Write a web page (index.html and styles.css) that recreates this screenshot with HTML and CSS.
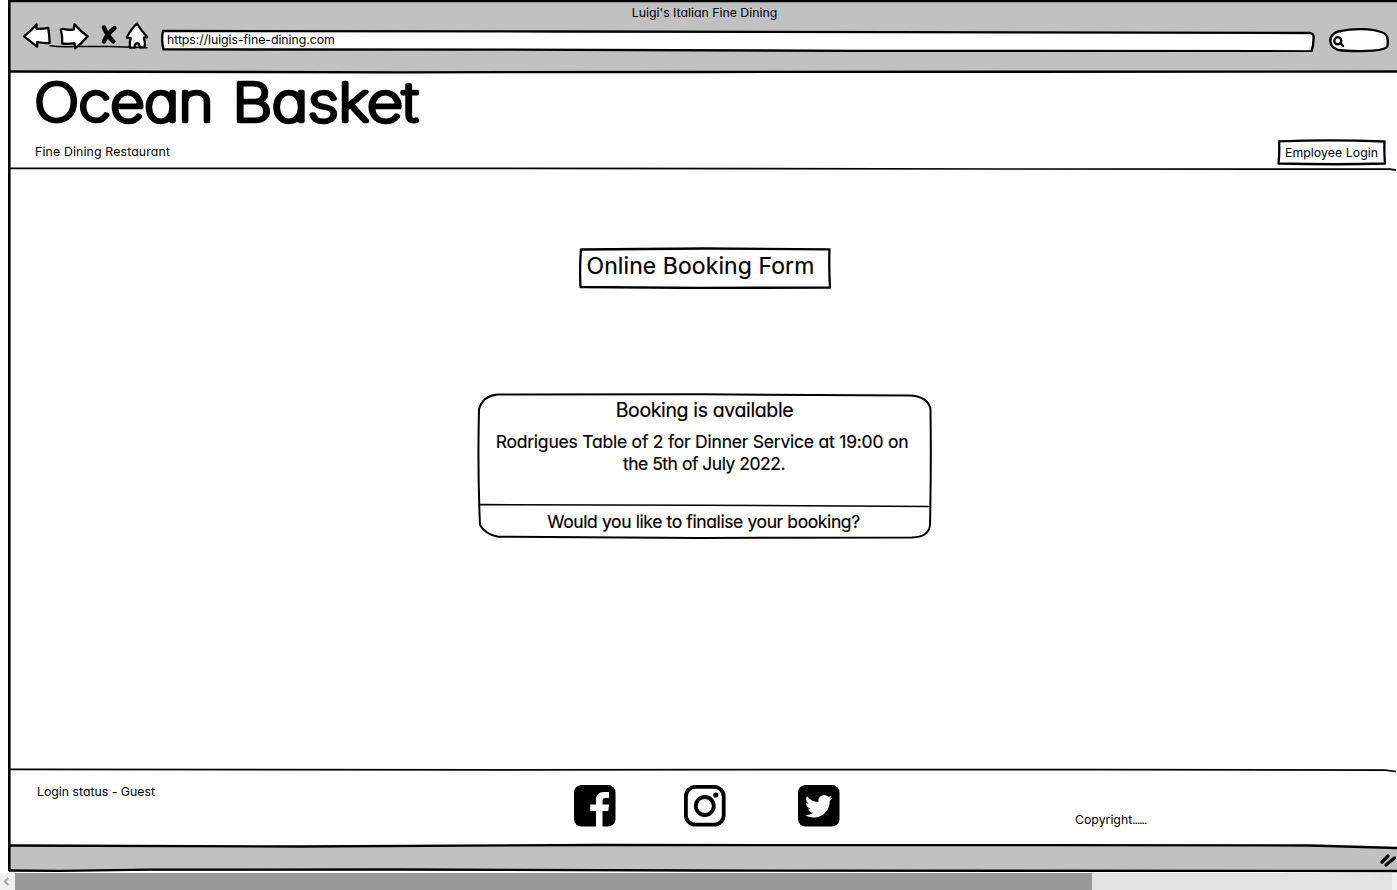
FILE: index.html
```html
<!DOCTYPE html>
<html lang="en">
<head>
<meta charset="utf-8">
<title>Luigi's Italian Fine Dining</title>
<link rel="stylesheet" href="styles.css">
</head>
<body>
<div class="screen">
  <div class="window">
    <header class="chrome">
      <div class="chrome-title"><span class="t-title">Luigi's Italian Fine Dining</span></div>
      <div class="toolbar">
        <svg class="nav-icons" viewBox="20 20 132 30" width="132" height="30">
          <g class="ink-shape">
            <path d="M24 36.3Q31 31 36.500 24.500L36.500 28.800Q42 29.200 48.300 27.800Q49.500 36 49.600 43Q43 43.500 37.300 42L37 46.600Q30 41 24 36.300Z"/>
            <path class="thin" d="M50 45.800Q60 47.200 75 46.500L110 46.600 147 47.800"/>
            <path d="M60.800 30Q61 28.800 64 29Q69 30.500 73.800 29.300L74.500 24.200Q80 31 87.600 36.300Q82 43.500 75 48.200L74.600 43.200Q68 44.500 62.200 43.500Q62.800 36 60.800 30Z"/>
            <path d="M137 23.500Q141 30.500 147.200 37L143.800 37.600Q145.500 42 144.800 47.200L139.800 47.300Q139 42.500 136.500 43.300Q134.500 43.500 134.800 47.700L129.800 47.600Q129.300 42 130.800 38.200L126.800 37.500Q131 29 137 23.500Z"/>
          </g>
          <path class="cross" d="M103.800 27.500Q108 36.500 113.300 41.300M114.500 28Q107 34 104 41.500"/>
        </svg>
        <div class="address">
          <svg class="sketch" viewBox="0 0 1155 23" width="1155" height="23"><path d="M3 2 400 2.500 1150.500 4Q1154.500 5 1153.500 10Q1153.500 17 1151.500 22.300L700 21.800 350 20.700 3.500 20.400Q1 11 3 2Z"/></svg>
          <span class="t-url">https://luigis-fine-dining.com</span>
        </div>
        <svg class="search" viewBox="1328 26 64 28" width="64" height="28">
          <g class="ink-shape"><path d="M1343 50.500C1328 51 1325 33 1341 31C1353 28 1372 28.500 1381 32C1389 34 1388 41 1387.500 46C1386 51 1365 52 1343 50.500Z"/>
          <path d="M1338.500 37.300A3.500 3.500 0 1 0 1339 44A3.500 3.500 0 0 0 1338.500 37.300M1340.500 43 1343 46"/></g>
        </svg>
      </div>
    </header>
    <section class="site-header">
      <h1 class="brand"><svg width="400" height="67" viewBox="0 0 400 67"><text x="-0.500" y="49" textLength="179" lengthAdjust="spacingAndGlyphs">Ocean</text><text x="197.500" y="49" textLength="185" lengthAdjust="spacingAndGlyphs">Basket</text></svg></h1>
      <div class="subrow">
        <span class="t-sub">Fine Dining Restaurant</span>
        <div class="login">
          <svg class="sketch" viewBox="0 0 109 27" width="109" height="27"><path d="M2 2.300Q54 .2 107.500 2.500Q107 13 108 24.500Q60 26 1.500 24.500Q2.800 12 2 2.300Z"/></svg>
          <span class="t-login">Employee Login</span>
        </div>
      </div>
    </section>
    <main class="content">
      <div class="form-title">
        <svg class="sketch" viewBox="0 0 252 42" width="252" height="42"><path d="M2 2.500 126 1.500 250.500 2.300Q249.800 20 251 40.500L120 41 1.500 40Q.5 20 2 2.500Z"/></svg>
        <span class="t-form">Online Booking Form</span>
      </div>
      <div class="card">
        <svg class="sketch card-lines" viewBox="477 393 455 146" width="455" height="146"><path d="M497 394.500 700 394.300 911 395.500Q928 397 930.500 409Q931.300 465 930 525Q929 537 912 537.500L700 538 498 536.800Q485 534 480 525Q477.500 470 479 409Q483 396 497 394.500Z"/><path class="divider" d="M480 504.600 700 505.200 930 506.500"/></svg>
        <div class="card-title"><span class="t-card">Booking is available</span></div>
        <div class="card-body"><span class="t-line1">Rodrigues Table of 2 for Dinner Service at 19:00 on</span><span class="t-line2">the 5th of July 2022.</span></div>
        <div class="card-foot"><span class="t-foot">Would you like to finalise your booking?</span></div>
      </div>
    </main>
    <footer class="site-footer">
      <span class="t-status">Login status - Guest</span>
      <div class="social">
        <svg viewBox="0 0 42 42" width="42" height="42"><rect width="41.500" height="41.500" rx="7.500"/><path class="white" d="M22 42V26H16.300V19.500H22V15Q22 7 30 7H35V13H31.500Q28.500 13 28.500 16V19.500H35L34.300 26H28.500V42Z"/></svg>
        <svg viewBox="0 0 42 42" width="42" height="42"><rect class="ring" x="1.900" y="1.900" width="37.800" height="37.800" rx="9.500"/><circle class="ring" cx="20.800" cy="21" r="9"/><circle cx="31.800" cy="10" r="2.600"/></svg>
        <svg viewBox="0 0 42 42" width="42" height="42"><rect width="41.500" height="41.500" rx="7.500"/><g transform="translate(7 7.500) scale(1.150)"><path class="white" d="M23.950 4.570a10 10 0 0 1-2.820.770 4.960 4.960 0 0 0 2.160-2.720c-.950.560-2 .960-3.130 1.180a4.920 4.920 0 0 0-8.380 4.480C7.690 8.090 4.070 6.130 1.640 3.160a4.930 4.930 0 0 0 1.520 6.570 4.900 4.900 0 0 1-2.230-.610v.060a4.920 4.920 0 0 0 3.950 4.830 5 5 0 0 1-2.210.080 4.940 4.940 0 0 0 4.600 3.420A9.870 9.870 0 0 1 0 19.540a13.990 13.990 0 0 0 7.550 2.210c9.050 0 14-7.500 14-13.980 0-.210 0-.420-.020-.630a9.940 9.940 0 0 0 2.460-2.550z"/></g></svg>
      </div>
      <span class="t-copy">Copyright<span class="dots">......</span></span>
    </footer>
    <div class="statusbar"></div>
    <svg class="frame" viewBox="0 0 1397 873" width="1397" height="873">
      <path class="bar" d="M10 845.500 300 846 600 845 1050 845 1310 845.500 1397 848V871H10Z"/>
      <path class="heavy" d="M9.300 871V0M8 1H1397"/>
      <path class="mid" d="M10 71.500 400 72.300 700 72 1397 71.500M10 845.500 300 846.500 600 845 1050 845.200 1310 845.500 1397 848M9 870.500 60 870.800 150 869.700 400 869.500 700 870.500 1397 871"/>
      <path class="light" d="M10 168.300 500 168.300 1000 169 1390 169.200 1396 170.200M10 769.400 500 769.800 1100 769.600 1385 770.200 1396 771.500"/>
      <path class="grip" d="M1382 862 1388 856M1386 865 1394.500 858"/>
    </svg>
  </div>
  <div class="scrollbar">
    <svg class="arrow" viewBox="0 0 15 17" width="15" height="17"><path d="M8.300 5 4.700 8.500 8.300 12"/></svg>
    <div class="thumb"></div>
    <div class="track"></div>
    <div class="end"></div>
  </div>
</div>
</body>
</html>
```

FILE: styles.css
```css
* { box-sizing: border-box; }
body {
  margin: 0;
  background: #fff;
  color: #000;
  font: 12.300px/16px Inter, "Noto Sans", sans-serif;
  font-feature-settings: "cv11" 1, "calt" 0;
  overflow: hidden;
}
span { white-space: nowrap; }
.screen { width: 1397px; height: 890px; display: flex; flex-direction: column; }
.window { position: relative; height: 873px; padding-left: 10px; display: flex; flex-direction: column; }
.frame { position: absolute; left: 0; top: 0; fill: none; stroke: #000; pointer-events: none; }
.frame .bar { fill: #c1c1c1; stroke: none; }
.frame .heavy { stroke-width: 2.600; }
.frame .mid { stroke-width: 2.300; }
.frame .light { stroke-width: 1.700; }
.frame .grip { stroke-width: 3.300; stroke-linecap: round; }

.chrome { height: 72px; background: #c1c1c1; }
.chrome-title { height: 26px; padding: 5px 0 0 2px; text-align: center; }
.toolbar { display: flex; align-items: flex-start; padding-left: 10px; }
.nav-icons { margin-top: -6px; }
.ink-shape { fill: #fff; stroke: #000; stroke-width: 2.300; stroke-linejoin: round; stroke-linecap: round; }
.ink-shape .thin { fill: none; stroke-width: 1.500; }
.cross { fill: none; stroke: #000; stroke-width: 4.400; stroke-linecap: round; }
.address { position: relative; width: 1155px; height: 23px; margin: 3px 0 0 8px; padding: 3px 0 0 7px; }
.address span { position: relative; }
.search { margin: 0 0 0 13px; }
.sketch { position: absolute; left: 0; top: 0; fill: #fff; stroke: #000; stroke-width: 2.300; stroke-linejoin: round; }
.t-url { letter-spacing: -0.050px; }

.site-header { height: 97px; padding-left: 25px; }
.brand { margin: 0; height: 67px; }
.brand svg { display: block; }
.brand text {
  font-size: 52px;
  font-weight: 100;
  stroke: #000;
  stroke-width: 4.600;
  stroke-linejoin: round;
  stroke-linecap: round;
}
.subrow { display: flex; justify-content: space-between; align-items: flex-start; padding-right: 11px; }
.t-sub { padding-top: 5px; letter-spacing: 0.150px; }
.login { position: relative; width: 109px; height: 27px; padding: 6px 0 0 8px; }
.login span { position: relative; letter-spacing: 0.050px; }

.content { height: 601px; padding: 78px 0 0 2px; display: flex; flex-direction: column; align-items: center; }
.form-title { position: relative; width: 252px; height: 42px; padding: 5px 0 0 8px; font-size: 23px; line-height: 28px; -webkit-text-stroke: 0.200px #000; }
.form-title span { position: relative; letter-spacing: 0.080px; }
.card { position: relative; width: 455px; height: 146px; margin-top: 104px; text-align: center; -webkit-text-stroke: 0.200px #000; }
.card-lines { stroke-width: 2; }
.card-lines .divider { stroke-width: 1.600; }
.card > div { position: relative; }
.card-title { height: 38px; padding-top: 5px; font-size: 19.500px; line-height: 24px; letter-spacing: -0.370px; }
.card-body { height: 75px; display: flex; flex-direction: column; align-items: center; font-size: 17.500px; line-height: 22px; }
.t-line1 { letter-spacing: -0.220px; margin-right: 5px; }
.t-line2 { letter-spacing: -0.480px; margin-right: 1px; }
.card-foot { padding: 5px 2px 0 0; font-size: 17.500px; line-height: 22px; letter-spacing: -0.390px; }

.site-footer { height: 75px; display: grid; grid-template-columns: 564px 501px 1fr; padding-top: 14px; }
.t-status { padding-left: 27px; }
.social { display: flex; padding-top: 1px; }
.social svg { margin-right: 68px; }
.social svg:nth-child(2) { margin-right: 72px; }
.social .white { fill: #fff; }
.social .ring { fill: none; stroke: #000; stroke-width: 3.800; }
.t-copy { padding-top: 28px; }
.dots { letter-spacing: -1.200px; }
.statusbar { height: 28px; }

.scrollbar { height: 17px; display: flex; background: #f1f1f1; }
.arrow { fill: none; stroke: #a3a3a3; stroke-width: 1.800; }
.thumb { width: 1077px; background: #999; }
.track { width: 300px; background: #e3e3e3; }
.end { flex: 1; background: #f1f1f1; }
```
